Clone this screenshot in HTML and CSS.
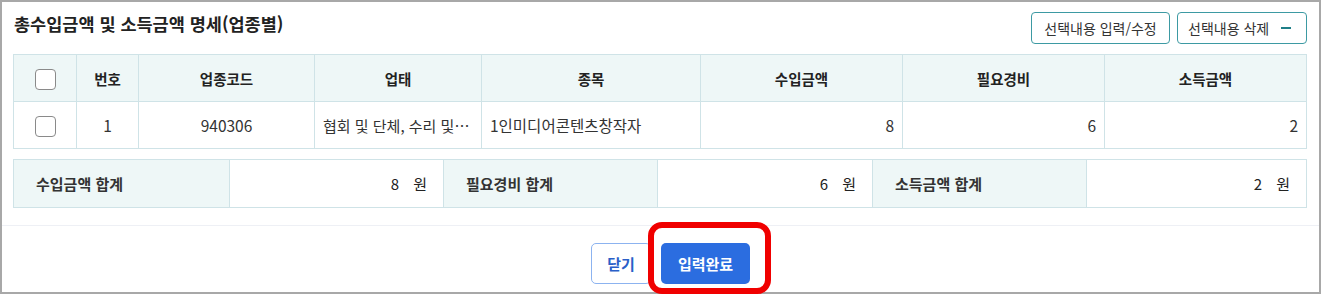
FILE: index.html
```html
<!DOCTYPE html>
<html lang="ko">
  <head>
    <meta charset="UTF-8" />
    <title>총수입금액 및 소득금액 명세</title>
    <link rel="stylesheet" href="styles.css">
  </head>
  <body>
    <div class="frame">
      <div class="head">
        <h2 class="title">총수입금액 및 소득금액 명세(업종별)</h2>
        <div class="head-buttons">
          <button class="line-btn">선택내용 입력/수정</button>
          <button class="line-btn">선택내용 삭제 <span class="minus"></span></button>
        </div>
      </div>

      <table class="grid">
        <colgroup>
          <col style="width:63px" />
          <col style="width:62px" />
          <col style="width:176px" />
          <col style="width:167px" />
          <col style="width:219px" />
          <col style="width:202px" />
          <col style="width:202px" />
          <col />
        </colgroup>
        <thead>
          <tr>
            <th><span class="check"></span></th>
            <th>번호</th>
            <th>업종코드</th>
            <th>업태</th>
            <th>종목</th>
            <th>수입금액</th>
            <th>필요경비</th>
            <th>소득금액</th>
          </tr>
        </thead>
        <tbody>
          <tr>
            <td class="center"><span class="check"></span></td>
            <td class="center">1</td>
            <td class="center">940306</td>
            <td class="left tight"><div class="clip">협회 및 단체, 수리 및…</div></td>
            <td class="left">1인미디어콘텐츠창작자</td>
            <td class="num">8</td>
            <td class="num">6</td>
            <td class="num">2</td>
          </tr>
        </tbody>
      </table>

      <table class="sum">
        <colgroup>
          <col style="width:216px" />
          <col style="width:214px" />
          <col style="width:214px" />
          <col style="width:215px" />
          <col style="width:214px" />
          <col />
        </colgroup>
        <tr>
          <th>수입금액 합계</th>
          <td>8<span class="unit">원</span></td>
          <th>필요경비 합계</th>
          <td>6<span class="unit">원</span></td>
          <th>소득금액 합계</th>
          <td>2<span class="unit">원</span></td>
        </tr>
      </table>

      <div class="foot">
        <button class="btn-close">닫기</button>
        <button class="btn-done">입력완료</button>
      </div>

      <div class="highlight"></div>
    </div>
  </body>
</html>
```

FILE: styles.css
```css
body {
  margin: 0;
  font-family: "Noto Sans CJK KR", "Noto Sans", sans-serif;
  color: #333;
  background: #fff;
}

.frame {
  position: relative;
  box-sizing: border-box;
  width: 1321px;
  height: 294px;
  border: 2px solid #a8a8a8;
  padding: 0 12px 0 11px;
}

.head {
  display: flex;
  justify-content: space-between;
  align-items: flex-start;
  height: 52px;
  padding-top: 10px;
  box-sizing: border-box;
}

.title {
  margin: 0;
  padding: 1px 0 0 1px;
  font-size: 17.5px;
  line-height: 21px;
  font-weight: bold;
  color: #222;
}

.head-buttons {
  display: flex;
  gap: 7px;
}

.line-btn {
  height: 32px;
  padding: 0 10px;
  border: 1px solid #3d9aa3;
  border-radius: 4px;
  background: #fff;
  color: #333;
  font-family: inherit;
  font-size: 14px;
  display: flex;
  align-items: center;
  gap: 12px;
}

.line-btn:first-child {
  width: 139px;
  justify-content: center;
}

.line-btn:last-child {
  width: 130px;
}

.minus {
  display: inline-block;
  width: 10px;
  height: 2px;
  background: #1f7f88;
}

table {
  width: 100%;
  border-collapse: collapse;
  table-layout: fixed;
}

.grid th,
.grid td {
  height: 46px;
  border: 1px solid #cfe3e7;
  font-size: 15.5px;
  padding: 0 8px;
}

.grid th {
  background: #eef7f7;
  font-size: 14.5px;
  font-weight: bold;
  color: #222;
  text-align: center;
}

.center {
  text-align: center;
}

.left {
  text-align: left;
}

.num {
  text-align: right;
}

.grid td.tight {
  padding-right: 2px;
  font-size: 15px;
}

.clip {
  white-space: nowrap;
  overflow: hidden;
}

.check {
  display: inline-block;
  width: 19px;
  height: 19px;
  border: 1px solid #8a8a8a;
  border-radius: 4px;
  background: #fff;
  vertical-align: middle;
}

.sum {
  margin-top: 10px;
}

.sum th,
.sum td {
  height: 45px;
  border: 1px solid #cfe3e7;
  font-size: 15px;
}

.sum th {
  background: #eef7f7;
  text-align: left;
  padding-left: 22px;
  font-weight: 600;
  color: #333;
}

.sum td {
  text-align: right;
  padding-right: 16px;
  color: #222;
}

.unit {
  margin-left: 14px;
}

.foot {
  display: flex;
  justify-content: center;
  gap: 10px;
  margin: 17px -12px 0 -11px;
  padding: 17px 0 0 20px;
  border-top: 1px solid #eef0f5;
}

.foot button {
  height: 41px;
  border-radius: 5px;
  font-family: inherit;
  font-size: 15px;
  font-weight: bold;
}

.btn-close {
  width: 60px;
  border: 1px solid #8cb3f0;
  background: #fff;
  color: #2a5fc8;
}

.btn-done {
  width: 89px;
  border: none;
  background: #2b6de0;
  color: #fff;
}

.highlight {
  position: absolute;
  left: 646px;
  top: 220px;
  width: 111px;
  height: 60px;
  border: 6px solid #f00000;
  border-radius: 14px;
}
```
